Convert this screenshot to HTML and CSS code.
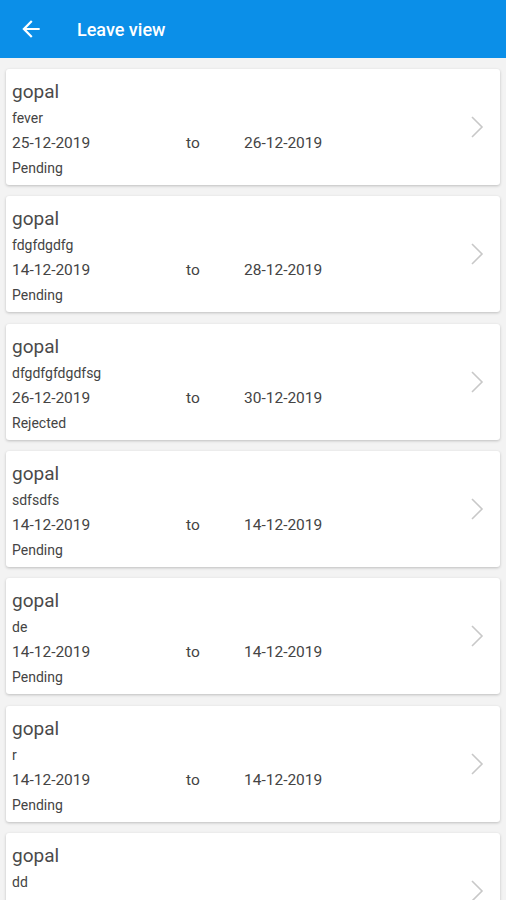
FILE: index.html
```html
<!DOCTYPE html>
<html>
<head>
<meta charset="utf-8">
<link rel="stylesheet" href="styles.css">
</head>
<body>
<header class="appbar">
  <svg class="back" width="26" height="26" viewBox="0 0 24 24"><path d="M20 11H7.83l5.59-5.59L12 4l-8 8 8 8 1.41-1.41L7.83 13H20v-2z" fill="#fff"/></svg>
  <span class="title">Leave view</span>
</header>
<main class="list">
  <div class="card">
    <div class="info">
      <div class="name">gopal</div>
      <div class="reason">fever</div>
      <div class="dates"><span class="from">25-12-2019</span><span class="to">to</span><span>26-12-2019</span></div>
      <div class="status">Pending</div>
    </div>
    <svg class="chev" width="14" height="24" viewBox="0 0 14 24"><path d="M2 2l10 10-10 10" fill="none" stroke="#c8c8c8" stroke-width="1.6"/></svg>
  </div>
  <div class="card">
    <div class="info">
      <div class="name">gopal</div>
      <div class="reason">fdgfdgdfg</div>
      <div class="dates"><span class="from">14-12-2019</span><span class="to">to</span><span>28-12-2019</span></div>
      <div class="status">Pending</div>
    </div>
    <svg class="chev" width="14" height="24" viewBox="0 0 14 24"><path d="M2 2l10 10-10 10" fill="none" stroke="#c8c8c8" stroke-width="1.6"/></svg>
  </div>
  <div class="card">
    <div class="info">
      <div class="name">gopal</div>
      <div class="reason">dfgdfgfdgdfsg</div>
      <div class="dates"><span class="from">26-12-2019</span><span class="to">to</span><span>30-12-2019</span></div>
      <div class="status">Rejected</div>
    </div>
    <svg class="chev" width="14" height="24" viewBox="0 0 14 24"><path d="M2 2l10 10-10 10" fill="none" stroke="#c8c8c8" stroke-width="1.6"/></svg>
  </div>
  <div class="card">
    <div class="info">
      <div class="name">gopal</div>
      <div class="reason">sdfsdfs</div>
      <div class="dates"><span class="from">14-12-2019</span><span class="to">to</span><span>14-12-2019</span></div>
      <div class="status">Pending</div>
    </div>
    <svg class="chev" width="14" height="24" viewBox="0 0 14 24"><path d="M2 2l10 10-10 10" fill="none" stroke="#c8c8c8" stroke-width="1.6"/></svg>
  </div>
  <div class="card">
    <div class="info">
      <div class="name">gopal</div>
      <div class="reason">de</div>
      <div class="dates"><span class="from">14-12-2019</span><span class="to">to</span><span>14-12-2019</span></div>
      <div class="status">Pending</div>
    </div>
    <svg class="chev" width="14" height="24" viewBox="0 0 14 24"><path d="M2 2l10 10-10 10" fill="none" stroke="#c8c8c8" stroke-width="1.6"/></svg>
  </div>
  <div class="card">
    <div class="info">
      <div class="name">gopal</div>
      <div class="reason">r</div>
      <div class="dates"><span class="from">14-12-2019</span><span class="to">to</span><span>14-12-2019</span></div>
      <div class="status">Pending</div>
    </div>
    <svg class="chev" width="14" height="24" viewBox="0 0 14 24"><path d="M2 2l10 10-10 10" fill="none" stroke="#c8c8c8" stroke-width="1.6"/></svg>
  </div>
  <div class="card">
    <div class="info">
      <div class="name">gopal</div>
      <div class="reason">dd</div>
      <div class="dates"><span class="from">14-12-2019</span><span class="to">to</span><span>14-12-2019</span></div>
      <div class="status">Pending</div>
    </div>
    <svg class="chev" width="14" height="24" viewBox="0 0 14 24"><path d="M2 2l10 10-10 10" fill="none" stroke="#c8c8c8" stroke-width="1.6"/></svg>
  </div>
</main>
</body>
</html>
```
FILE: styles.css
```css
html, body {
  margin: 0;
  padding: 0;
}
body {
  width: 506px;
  height: 900px;
  overflow: hidden;
  background: #f3f3f3;
  font-family: Roboto, "Noto Sans", sans-serif;
}
.appbar {
  height: 58px;
  background: #0b8fe8;
  display: flex;
  align-items: center;
  padding-left: 18px;
  box-sizing: border-box;
}
.back {
  display: block;
}
.title {
  color: #fff;
  font-size: 18px;
  font-weight: 500;
  margin-left: 33px;
}
.list {
  display: flex;
  flex-direction: column;
  gap: 11.33px;
  padding: 11px 6px 0 6px;
}
.card {
  flex: none;
  height: 116px;
  box-sizing: border-box;
  background: #fff;
  border-radius: 3px;
  box-shadow: 0 1px 3px rgba(0,0,0,0.22);
  display: flex;
  align-items: center;
  padding: 0 16px 0 6px;
}
.info {
  flex: 1;
  align-self: flex-start;
  padding-top: 11px;
  color: #444;
}
.name {
  font-size: 19px;
  line-height: 24px;
  color: #4a4a4a;
}
.reason {
  font-size: 14px;
  line-height: 28px;
}
.dates {
  display: flex;
  font-size: 15.5px;
  line-height: 22px;
}
.from {
  width: 174px;
}
.to {
  width: 58px;
}
.status {
  font-size: 14px;
  line-height: 29px;
}
.chev {
  display: block;
}
```
